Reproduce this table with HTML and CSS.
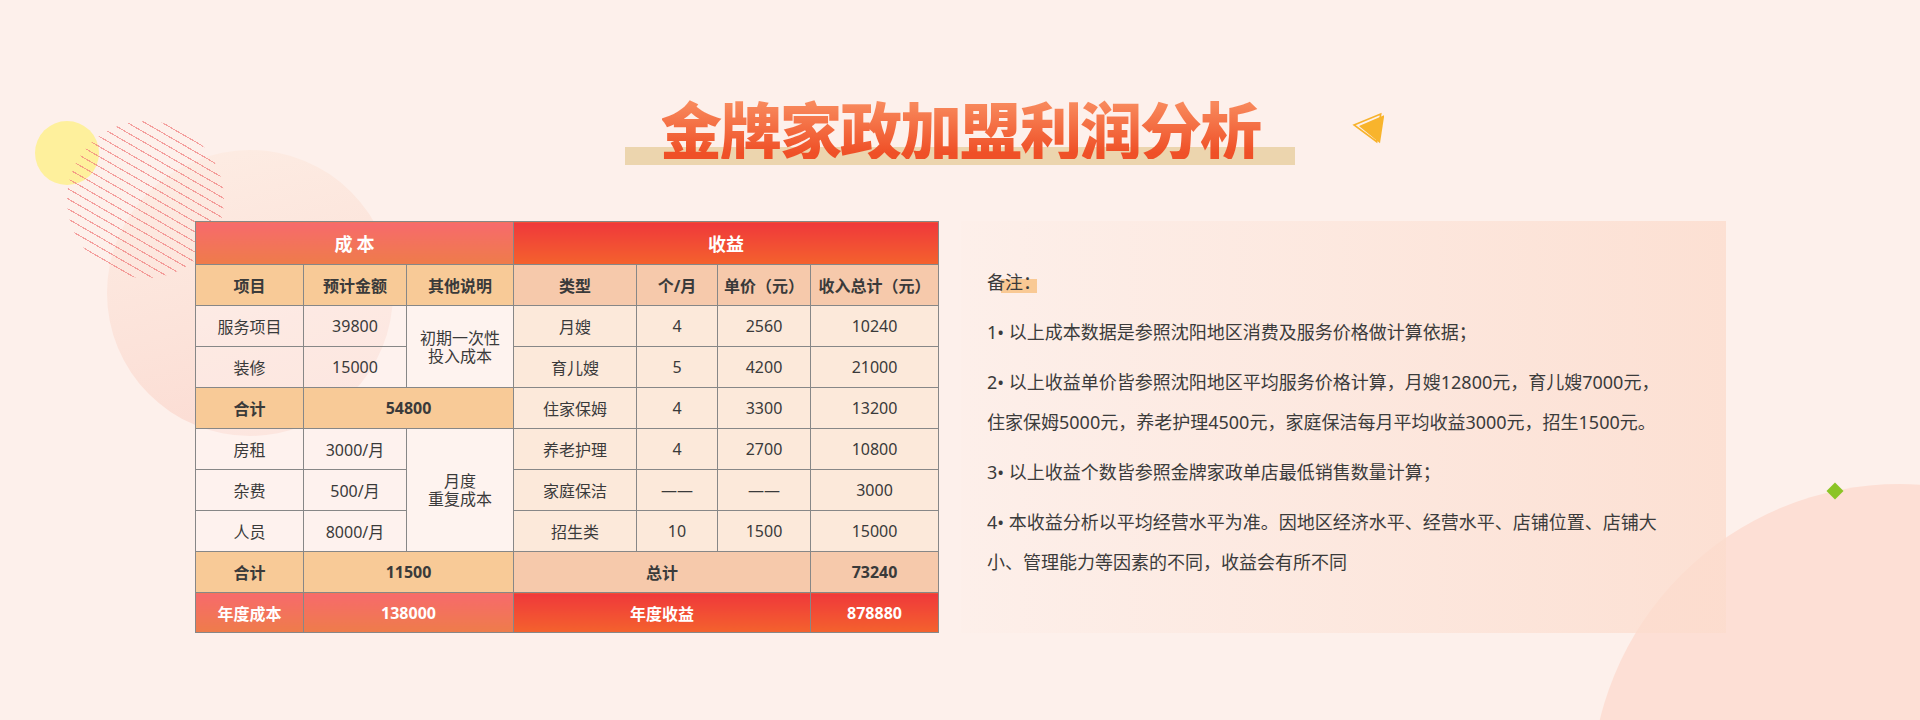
FILE: index.html
```html
<!DOCTYPE html>
<html lang="zh-CN">
<head>
<meta charset="utf-8">
<title>金牌家政加盟利润分析</title>
<link rel="stylesheet" href="styles.css">
</head>
<body>
<div class="deco" aria-hidden="true">
  <div class="circle-big"></div>
  <div class="circle-yellow"></div>
  <div class="circle-hatch"></div>
  <div class="circle-br"></div>
  <div class="diamond"></div>
  <svg class="tri" width="44" height="40" viewBox="0 0 44 40">
    <polygon points="14,15 40.7,4 36.7,31.7" fill="none" stroke="#f7b22c" stroke-width="1.6" stroke-linejoin="miter"/>
    <polygon points="24,16 49.3,5 45,33.3" transform="translate(-5 0)" fill="#f8b42c"/>
  </svg>
</div>

<main class="page">
  <header class="title-wrap">
    <h1 class="title">金牌家政加盟利润分析</h1>
  </header>

  <section class="content">
    <table class="profit">
      <colgroup>
        <col class="w108"><col class="w103"><col class="w107"><col class="w123"><col class="w81"><col class="w93"><col class="w128">
      </colgroup>
      <tr class="r-title">
        <th colspan="3" class="c-grad big">成本</th>
        <th colspan="4" class="i-grad big">收益</th>
      </tr>
      <tr>
        <th class="c-head">项目</th>
        <th class="c-head">预计金额</th>
        <th class="c-head">其他说明</th>
        <th class="i-head">类型</th>
        <th class="i-head">个/月</th>
        <th class="i-head">单价（元）</th>
        <th class="i-head">收入总计（元）</th>
      </tr>
      <tr>
        <td class="c-body">服务项目</td>
        <td class="c-body">39800</td>
        <td class="c-note" rowspan="2"><span class="ln">初期一次性</span><span class="ln">投入成本</span></td>
        <td class="i-body">月嫂</td>
        <td class="i-body">4</td>
        <td class="i-body">2560</td>
        <td class="i-body">10240</td>
      </tr>
      <tr>
        <td class="c-body">装修</td>
        <td class="c-body">15000</td>
        <td class="i-body">育儿嫂</td>
        <td class="i-body">5</td>
        <td class="i-body">4200</td>
        <td class="i-body">21000</td>
      </tr>
      <tr>
        <td class="c-head">合计</td>
        <td class="c-head" colspan="2">54800</td>
        <td class="i-body">住家保姆</td>
        <td class="i-body">4</td>
        <td class="i-body">3300</td>
        <td class="i-body">13200</td>
      </tr>
      <tr>
        <td class="c-body">房租</td>
        <td class="c-body">3000/月</td>
        <td class="c-note" rowspan="3"><span class="ln">月度</span><span class="ln">重复成本</span></td>
        <td class="i-body">养老护理</td>
        <td class="i-body">4</td>
        <td class="i-body">2700</td>
        <td class="i-body">10800</td>
      </tr>
      <tr>
        <td class="c-body">杂费</td>
        <td class="c-body">500/月</td>
        <td class="i-body">家庭保洁</td>
        <td class="i-body">——</td>
        <td class="i-body">——</td>
        <td class="i-body">3000</td>
      </tr>
      <tr>
        <td class="c-body">人员</td>
        <td class="c-body">8000/月</td>
        <td class="i-body">招生类</td>
        <td class="i-body">10</td>
        <td class="i-body">1500</td>
        <td class="i-body">15000</td>
      </tr>
      <tr>
        <td class="c-head">合计</td>
        <td class="c-head" colspan="2">11500</td>
        <td class="i-head" colspan="3">总计</td>
        <td class="i-head">73240</td>
      </tr>
      <tr class="r-last">
        <td class="c-grad">年度成本</td>
        <td class="c-grad" colspan="2">138000</td>
        <td class="i-grad" colspan="3">年度收益</td>
        <td class="i-grad">878880</td>
      </tr>
    </table>

    <div class="notes">
      <p class="label"><span class="hl">备注：</span></p>
      <p>1• 以上成本数据是参照沈阳地区消费及服务价格做计算依据；</p>
      <p>2• 以上收益单价皆参照沈阳地区平均服务价格计算，月嫂12800元，育儿嫂7000元，<br>住家保姆5000元，养老护理4500元，家庭保洁每月平均收益3000元，招生1500元。</p>
      <p>3• 以上收益个数皆参照金牌家政单店最低销售数量计算；</p>
      <p>4• 本收益分析以平均经营水平为准。因地区经济水平、经营水平、店铺位置、店铺大<br>小、管理能力等因素的不同，收益会有所不同</p>
    </div>
  </section>
</main>
</body>
</html>
```

FILE: styles.css
```css
* { box-sizing: border-box; }

html, body {
  margin: 0;
  padding: 0;
}

body {
  width: 1920px;
  height: 720px;
  overflow: hidden;
  position: relative;
  background: #fdf0eb;
  font-family: "Noto Sans", "Noto Sans CJK SC", sans-serif;
  color: #3a3a3a;
}

/* ---------- decorations ---------- */
.deco {
  position: absolute;
  inset: 0;
  z-index: 0;
  overflow: hidden;
}

.circle-big {
  position: absolute;
  left: 107px;
  top: 150px;
  width: 286px;
  height: 286px;
  border-radius: 50%;
  background: linear-gradient(165deg, #fdede4 0%, #fce3da 55%, #fbdad1 100%);
}

.circle-yellow {
  position: absolute;
  left: 35px;
  top: 121px;
  width: 64px;
  height: 64px;
  border-radius: 50%;
  background: #fef09c;
}

.circle-hatch {
  position: absolute;
  left: 67px;
  top: 121px;
  width: 157px;
  height: 157px;
  border-radius: 50%;
  background: repeating-linear-gradient(30deg, rgba(0,0,0,0) 0 7.6px, rgba(240,125,125,0.7) 7.6px 8.7px);
}

.circle-br {
  position: absolute;
  left: 1591px;
  top: 484px;
  width: 618px;
  height: 618px;
  border-radius: 50%;
  background: #fddfd5;
}

.diamond {
  position: absolute;
  left: 1829px;
  top: 485px;
  width: 12px;
  height: 12px;
  background: #8bc425;
  transform: rotate(45deg);
}

.tri {
  position: absolute;
  left: 1340px;
  top: 110px;
}

/* ---------- page ---------- */
.page {
  position: relative;
  z-index: 1;
}

.title-wrap {
  display: flex;
  justify-content: center;
  padding-top: 97px;
}

.title {
  margin: 0;
  width: 670px;
  padding-bottom: 6px;
  text-align: center;
  font-family: "Noto Sans CJK SC", sans-serif;
  font-size: 62px;
  line-height: 62px;
  font-weight: 900;
  letter-spacing: -2px;
  color: #f26a3e;
  background: linear-gradient(#ecd5ae, #ecd5ae) no-repeat center bottom / 100% 18px;
}

@supports (-webkit-background-clip: text) {
  .title {
    background:
      linear-gradient(180deg, #f8895c 10%, #ef5027 90%) no-repeat 37px 0 / 600px 62px,
      linear-gradient(#ecd5ae, #ecd5ae) no-repeat center bottom / 100% 18px;
    -webkit-background-clip: text, border-box;
    background-clip: text, border-box;
    -webkit-text-fill-color: transparent;
  }
}

.content {
  display: flex;
  align-items: stretch;
  gap: 22px;
  padding-left: 195px;
  margin-top: 56px;
}

/* ---------- table ---------- */
.profit {
  border-collapse: collapse;
  table-layout: fixed;
  width: 743px;
  font-size: 16px;
  color: #3a3a3a;
}

.w108 { width: 108px; }
.w103 { width: 103px; }
.w107 { width: 107px; }
.w123 { width: 123px; }
.w81 { width: 81px; }
.w93 { width: 93px; }
.w128 { width: 128px; }

.profit tr { height: 41px; }
.profit tr.r-title { height: 43px; }
.profit tr.r-last { height: 40px; }

.profit th,
.profit td {
  border: 1px solid #878787;
  text-align: center;
  vertical-align: middle;
  padding: 0;
  font-weight: 400;
  white-space: nowrap;
}

.profit .big {
  font-size: 18px;
}

.profit th.c-grad.big {
  letter-spacing: 4px;
  padding-left: 4px;
}

.profit .c-grad {
  background: linear-gradient(180deg, #f76a6c 0%, #ee7c4a 100%);
  color: #fff;
  font-weight: 700;
}

.profit .i-grad {
  background: linear-gradient(180deg, #ef383b 0%, #f4622d 100%);
  color: #fff;
  font-weight: 700;
}

.profit .c-head {
  background: #f8ca97;
  font-weight: 700;
}

.profit .i-head {
  background: #f6c9ab;
  font-weight: 700;
}

.profit .c-body {
  background: rgba(255, 246, 242, 0.4);
}

.profit .c-note {
  background: rgba(255, 246, 242, 0.55);
}

.profit .c-note .ln {
  display: block;
  height: 18px;
  line-height: 18px;
  overflow: visible;
}

.profit .i-body {
  background: #fce9da;
}

/* ---------- notes ---------- */
.notes {
  width: 765px;
  padding: 41px 0 0 26px;
  background: linear-gradient(90deg, rgba(252, 222, 208, 0.05) 0%, rgba(252, 222, 208, 0.45) 50%, rgba(252, 220, 205, 0.8) 100%);
  font-size: 18px;
  line-height: 40px;
  color: #3b3b3b;
  white-space: nowrap;
}

.notes p {
  margin: 10px 0 0;
}

.notes p.label {
  margin-top: 0;
}

.hl {
  background: linear-gradient(#f9c994, #f9c994) no-repeat 14px 9px / 36px 14px;
}
```
